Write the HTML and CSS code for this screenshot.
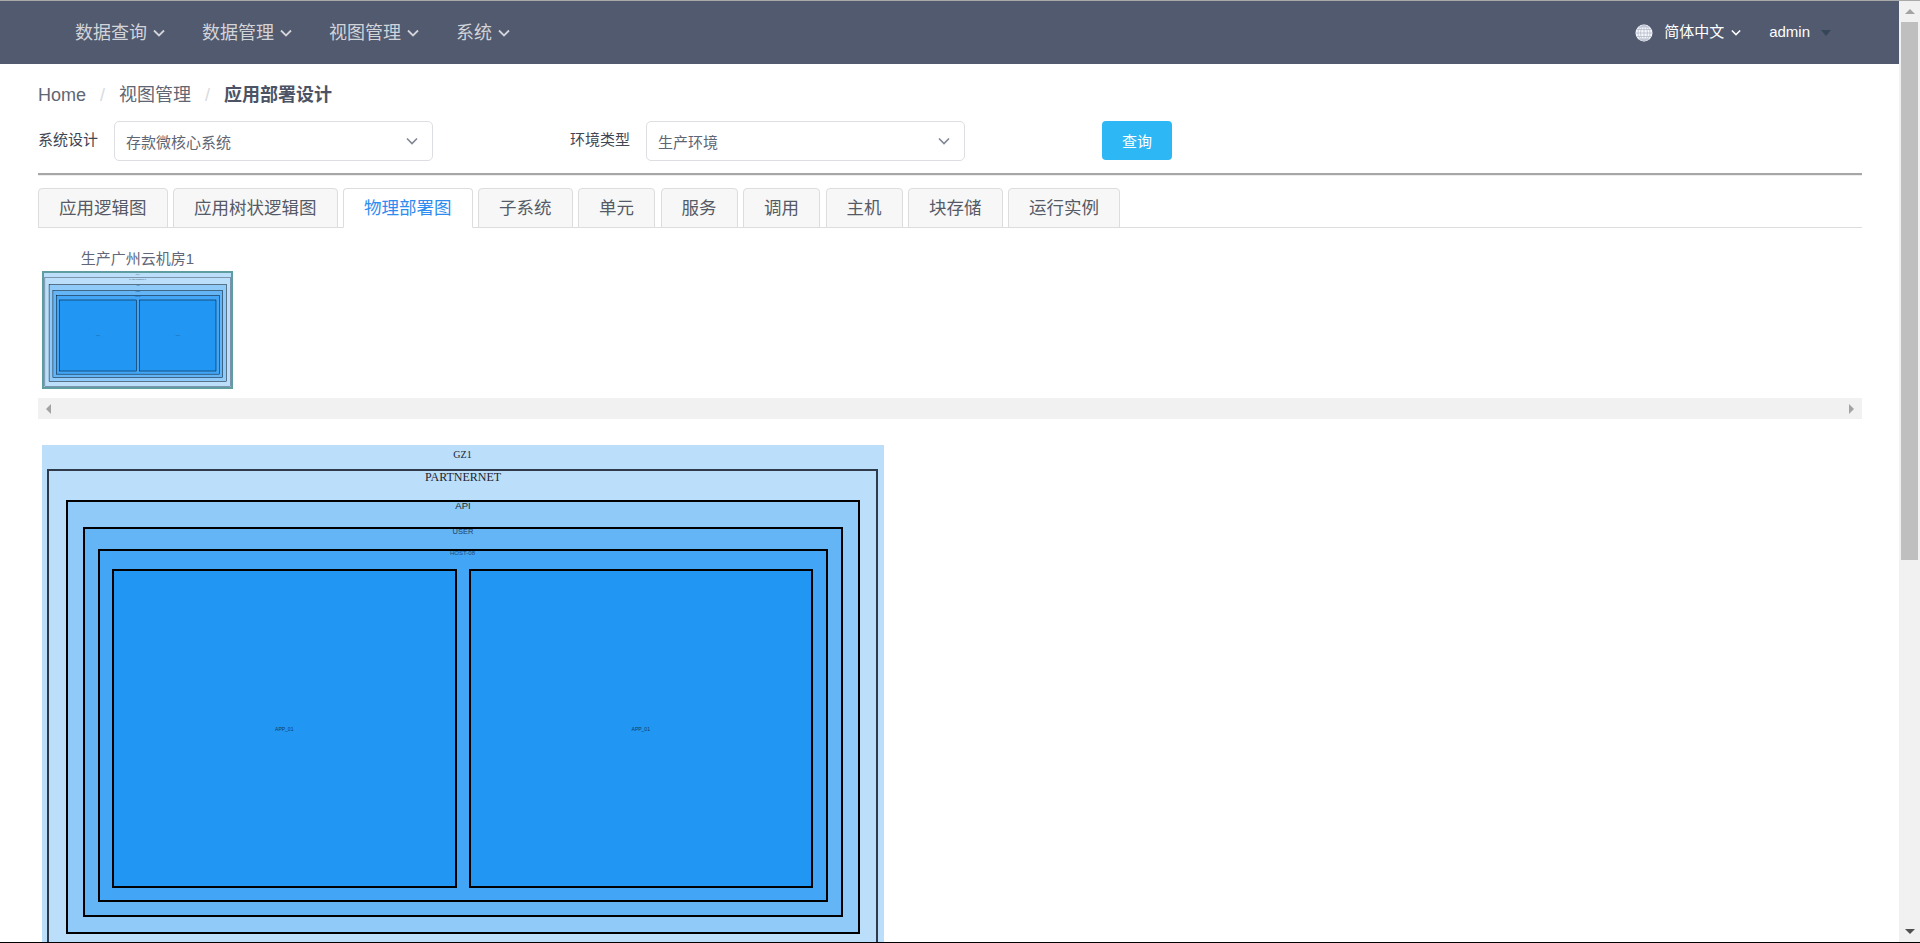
FILE: index.html
```html
<!DOCTYPE html>
<html lang="zh">
<head>
<meta charset="utf-8">
<title>应用部署设计</title>
<link rel="stylesheet" href="styles.css">
</head>
<body>
<div class="shell">
  <div class="page">
    <header class="nav">
      <div class="nav-item">数据查询<svg class="chev" viewBox="0 0 12 8"><path d="M1 1.5 6 6.5 11 1.5"/></svg></div>
      <div class="nav-item">数据管理<svg class="chev" viewBox="0 0 12 8"><path d="M1 1.5 6 6.5 11 1.5"/></svg></div>
      <div class="nav-item">视图管理<svg class="chev" viewBox="0 0 12 8"><path d="M1 1.5 6 6.5 11 1.5"/></svg></div>
      <div class="nav-item">系统<svg class="chev" viewBox="0 0 12 8"><path d="M1 1.5 6 6.5 11 1.5"/></svg></div>
      <div class="nav-right">
        <svg class="globe" viewBox="0 0 18 18">
          <circle class="globe-fill" cx="9" cy="9" r="8.5"/>
          <path class="globe-line" d="M9 .5V17.500M.5 9H17.500M1.500 5.500H16.500M1.500 12.500H16.500M3 2.800H15M3 15.200H15M9 .5C4.500 4 4.500 14 9 17.500M9 .5C13.500 4 13.500 14 9 17.500M9 .5C1 4 1 14 9 17.500M9 .5C17 4 17 14 9 17.500"/>
        </svg>
        <span class="lang">简体中文</span>
        <svg class="chev chev-small" viewBox="0 0 12 8"><path d="M1 1.500 6 6.500 11 1.500"/></svg>
        <span class="user">admin</span>
        <span class="caret"></span>
      </div>
    </header>

    <main class="content">
      <nav class="crumbs">
        <span>Home</span><span class="sep">/</span><span>视图管理</span><span class="sep">/</span><strong>应用部署设计</strong>
      </nav>

      <div class="filters">
        <div class="field">
          <label class="field-label">系统设计</label>
          <div class="select"><span>存款微核心系统</span><svg class="sel-chev" viewBox="0 0 12 8"><path d="M1 1.500 6 6.500 11 1.500"/></svg></div>
        </div>
        <div class="field">
          <label class="field-label">环境类型</label>
          <div class="select"><span>生产环境</span><svg class="sel-chev" viewBox="0 0 12 8"><path d="M1 1.500 6 6.500 11 1.500"/></svg></div>
        </div>
        <button class="query">查询</button>
      </div>

      <div class="rule"></div>

      <div class="tabs">
        <div class="tab">应用逻辑图</div>
        <div class="tab">应用树状逻辑图</div>
        <div class="tab tab-active">物理部署图</div>
        <div class="tab">子系统</div>
        <div class="tab">单元</div>
        <div class="tab">服务</div>
        <div class="tab">调用</div>
        <div class="tab">主机</div>
        <div class="tab">块存储</div>
        <div class="tab">运行实例</div>
      </div>

      <div class="thumb-strip">
        <div class="thumb">
          <div class="thumb-title">生产广州云机房1</div>
          <div class="thumb-frame">
            <div class="gz gz-scaled">
              <div class="lb lb-gz">GZ1</div>
              <div class="node partner">
                <div class="lb lb-partner">PARTNERNET</div>
                <div class="node api">
                  <div class="lb lb-api">API</div>
                  <div class="node user-box">
                    <div class="lb lb-user">USER</div>
                    <div class="node host">
                      <div class="lb lb-host">HOST-08</div>
                      <div class="apps">
                        <div class="node app-box">APP_01</div>
                        <div class="node app-box">APP_01</div>
                      </div>
                    </div>
                  </div>
                </div>
              </div>
            </div>
          </div>
        </div>
      </div>

      <div class="hscroll"><span class="arr arr-left"></span><span class="arr arr-right"></span></div>

      <div class="gz gz-main">
        <div class="lb lb-gz">GZ1</div>
        <div class="node partner">
          <div class="lb lb-partner">PARTNERNET</div>
          <div class="node api">
            <div class="lb lb-api">API</div>
            <div class="node user-box">
              <div class="lb lb-user">USER</div>
              <div class="node host">
                <div class="lb lb-host">HOST-08</div>
                <div class="apps">
                  <div class="node app-box">APP_01</div>
                  <div class="node app-box">APP_01</div>
                </div>
              </div>
            </div>
          </div>
        </div>
      </div>
    </main>
  </div>

  <aside class="vscroll">
    <div class="vbtn"><span class="arr arr-up"></span></div>
    <div class="vthumb"></div>
    <div class="vspace"></div>
    <div class="vbtn vbtn-down"><span class="arr arr-down"></span></div>
  </aside>
</div>
</body>
</html>
```

FILE: styles.css
```css
* { box-sizing: border-box; }

html, body {
  margin: 0;
  height: 100%;
  overflow: hidden;
  background: #fff;
}

body {
  font-family: "Liberation Sans", "Noto Sans CJK SC", sans-serif;
  color: #515a6e;
}

.shell {
  display: flex;
  height: 943px;
  border-top: 1px solid #a9a9a9;
  border-bottom: 1px solid #000;
}

.page {
  width: 1899px;
  flex: none;
  overflow: hidden;
}

/* top navigation */
.nav {
  display: flex;
  align-items: center;
  height: 63px;
  padding: 0 68px 0 75px;
  background: #515a6e;
  gap: 37px;
}

.nav-item {
  display: flex;
  align-items: center;
  gap: 6px;
  font-size: 18px;
  line-height: 24px;
  color: #d2d4da;
}

.chev {
  width: 12px;
  height: 8px;
  fill: none;
  stroke: #d2d4da;
  stroke-width: 1.8;
}

.nav-right {
  display: flex;
  align-items: center;
  margin-left: auto;
  padding-bottom: 2px;
  color: #fff;
}

.globe {
  width: 18px;
  height: 18px;
  margin: 2px 11px 0 0;
}

.globe-fill { fill: #f4f6fa; }

.globe-line {
  fill: none;
  stroke: #a4acbf;
  stroke-width: .6;
}

.lang {
  font-size: 15px;
  line-height: 20px;
}

.chev-small {
  width: 10px;
  height: 7px;
  margin: 2px 0 0 7px;
  stroke: #fff;
}

.user {
  margin-left: 28px;
  font-size: 15px;
  line-height: 20px;
}

.caret {
  width: 0;
  height: 0;
  margin: 2px 0 0 11px;
  border-style: solid;
  border-width: 6px 5.500px 0;
  border-color: #36465a transparent transparent;
}

/* content */
.content {
  padding: 0 37px 0 38px;
}

.crumbs {
  display: flex;
  align-items: center;
  padding-top: 20px;
  margin-bottom: 15px;
  font-size: 18px;
  line-height: 22px;
  color: #5f6673;
}

.crumbs strong {
  font-weight: 700;
  color: #4b5365;
}

.sep {
  margin: 0 14px;
  color: #d8dbe0;
}

.filters {
  display: flex;
  align-items: center;
  height: 40px;
}

.field {
  display: flex;
  align-items: center;
  gap: 16px;
  margin-right: 137px;
}

.field-label {
  font-size: 15px;
  line-height: 20px;
  color: #3f4654;
  position: relative;
  top: -1px;
}

.select {
  display: flex;
  align-items: center;
  justify-content: space-between;
  width: 319px;
  height: 40px;
  padding: 0 14px 0 11px;
  border: 1px solid #dcdee2;
  border-radius: 5px;
  font-size: 15px;
  color: #5f6673;
}

.sel-chev {
  width: 12px;
  height: 8px;
  fill: none;
  stroke: #808695;
  stroke-width: 1.6;
}

.query {
  width: 70px;
  height: 39px;
  margin-bottom: 1px;
  padding: 0;
  border: 0;
  border-radius: 4px;
  background: #2db7f5;
  color: #fff;
  font: inherit;
  font-size: 15px;
}

.rule {
  height: 3px;
  margin-top: 12px;
  border-top: 2px solid #a6a6a6;
  border-bottom: 1px solid #eeeeee;
}

/* tabs */
.tabs {
  display: flex;
  gap: 5.500px;
  height: 40px;
  margin-top: 12px;
  border-bottom: 1px solid #dddddd;
}

.tab {
  height: 40px;
  padding: 0 20px;
  border: 1px solid #dddddd;
  border-radius: 4px 4px 0 0;
  background: #f7f7f7;
  font-size: 17.500px;
  line-height: 38px;
  color: #555b66;
}

.tab-active {
  background: #fff;
  border-bottom-color: #fff;
  color: #2d8cf0;
}

/* thumbnails */
.thumb-strip {
  display: flex;
  margin-top: 21px;
  padding-left: 4px;
}

.thumb { width: 191px; }

.thumb-title {
  margin-bottom: 2px;
  font-size: 15px;
  line-height: 20px;
  text-align: center;
  color: #5f6779;
}

.thumb-frame {
  position: relative;
  height: 118px;
  overflow: hidden;
  background: #bbdefb;
}

.thumb-frame::after {
  content: "";
  position: absolute;
  inset: 0;
  border: 2px solid #5f9ea0;
}

.hscroll {
  display: flex;
  align-items: center;
  justify-content: space-between;
  height: 21px;
  margin-top: 9px;
  padding: 0 8px;
  background: #f1f1f1;
}

.arr {
  display: block;
  width: 0;
  height: 0;
  border-style: solid;
}

.arr-left {
  border-width: 5px 5px 5px 0;
  border-color: transparent #a3a3a3 transparent transparent;
}

.arr-right {
  border-width: 5px 0 5px 5px;
  border-color: transparent transparent transparent #a3a3a3;
}

.arr-up {
  border-width: 0 5px 5px;
  border-color: transparent transparent #a3a3a3;
}

.arr-down {
  border-width: 5px 5px 0;
  border-color: #505050 transparent transparent;
}

/* deployment diagram */
.gz {
  display: flex;
  flex-direction: column;
  width: 842px;
  height: 520px;
  padding: 0 6px 9px 5px;
  background: #bbdefb;
}

.gz-main {
  margin: 26px 0 0 4px;
}

.gz-scaled {
  transform: translate(1.500px, 1px) scale(.224);
  transform-origin: 0 0;
}

.node {
  display: flex;
  flex-direction: column;
  flex: 1;
  border: 2px solid #000;
}

.lb {
  flex: none;
  text-align: center;
  color: #1b2530;
}

.lb-gz {
  height: 24px;
  font-family: "Liberation Serif", serif;
  font-size: 10px;
  line-height: 20px;
}

.partner {
  padding: 0 16px 20px 17px;
  background: #bbdefb;
  border-color: #2f3b4b;
}

.lb-partner {
  height: 29px;
  font-family: "Liberation Serif", serif;
  font-size: 12px;
  line-height: 12px;
}

.api {
  padding: 0 15px 15px;
  background: #90caf9;
}

.lb-api {
  height: 25px;
  font-size: 9.500px;
  line-height: 8px;
}

.user-box {
  padding: 0 13px 13px;
  background: #64b5f6;
}

.lb-user {
  height: 20px;
  font-size: 7.500px;
  line-height: 6px;
  color: #1d3f66;
}

.host {
  padding: 0 13px 12px 12px;
  background: #42a5f5;
}

.lb-host {
  height: 18px;
  font-size: 6px;
  line-height: 5px;
  color: #1d4a80;
}

.apps {
  display: flex;
  flex: 1;
  gap: 12px;
}

.app-box {
  align-items: center;
  justify-content: center;
  background: #2196f3;
  font-size: 5px;
  color: #123c66;
}

/* page scrollbar */
.vscroll {
  display: flex;
  flex-direction: column;
  flex: none;
  width: 21px;
  background: #f1f1f1;
}

.vbtn {
  display: flex;
  align-items: center;
  justify-content: center;
  height: 21px;
}

.vbtn-down { height: 22px; }

.vthumb {
  height: 538px;
  margin: 0 2px;
  background: #bfbfbf;
}

.vspace { flex: 1; }
```
